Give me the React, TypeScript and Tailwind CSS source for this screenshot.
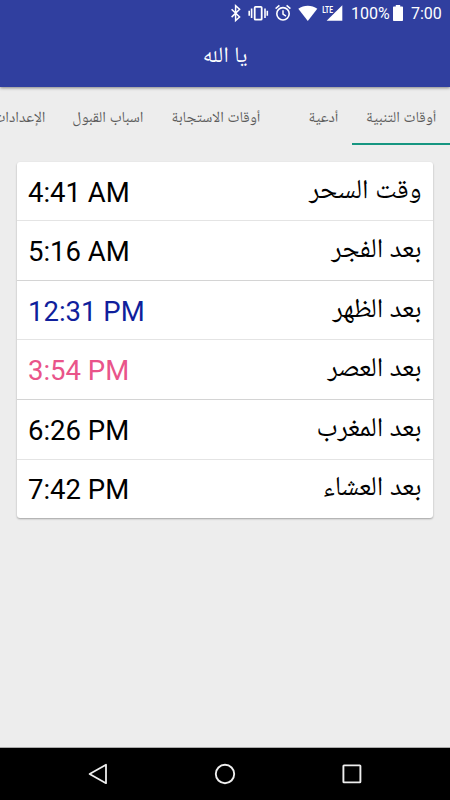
import React from 'react';

const tabs = [
  { label: 'أوقات التنبية', width: 'w-[98px]', active: true },
  { label: 'أدعية', width: 'w-[78px]' },
  { label: 'أوقات الاستجابة', width: 'w-[117px]' },
  { label: 'اسباب القبول', width: 'w-[98px]' },
  { label: 'الإعدادات', width: 'w-[86px]' },
];

const rows = [
  { time: '4:41 AM', label: 'وقت السحر', color: 'text-black', height: 'h-[59px]', line: 'border-[#e4e4e4]' },
  { time: '5:16 AM', label: 'بعد الفجر', color: 'text-black', height: 'h-[60px]', line: 'border-[#d4d4d4]' },
  { time: '12:31 PM', label: 'بعد الظهر', color: 'text-[#101f9c]', height: 'h-[59px]', line: 'border-[#e4e4e4]' },
  { time: '3:54 PM', label: 'بعد العصر', color: 'text-[#e9548a]', height: 'h-[60px]', line: 'border-[#d4d4d4]' },
  { time: '6:26 PM', label: 'بعد المغرب', color: 'text-black', height: 'h-[60px]', line: 'border-[#e4e4e4]' },
  { time: '7:42 PM', label: 'بعد العشاء', color: 'text-black', height: 'h-[58px]', line: 'border-transparent' },
];

const StatusIcons: React.FC = () => (
  <svg className="h-7 w-[125px] shrink-0" viewBox="0 0 125 28" fill="none">
    <path d="M1.6 9.2l8 7.8-4 3.6V5.6l4 3.7-8 7.8" stroke="#fff" strokeWidth="1.5" />
    <rect x="24.7" y="6.9" width="7" height="12.8" rx=".8" stroke="#fff" strokeWidth="1.8" />
    <path d="M21.6 8.5v9.5M35 8.5v9.5M19.2 10.7v5M37.3 10.7v5" stroke="#fff" strokeWidth="1.6" />
    <circle cx="53" cy="13.8" r="6.2" stroke="#fff" strokeWidth="1.6" />
    <path d="M53 10.2v4l3 1.9M45.6 8.6l3.8-3.2M60.4 8.6l-3.8-3.2" stroke="#fff" strokeWidth="1.5" />
    <path d="M68.3 8.8c5.5-4.2 13.5-4.2 19 0L77.8 21z" fill="#fff" />
    <path d="M112.3 5.2V20.8H96.6z" fill="#fff" />
    <path d="M91 4h12.8v9.6H91z" fill="#303f9f" />
    <text x="92.2" y="12.6" fill="#fff" fontFamily="Roboto, sans-serif" fontSize="9.5" fontWeight="700" textLength="10.8" lengthAdjust="spacingAndGlyphs">LTE</text>
  </svg>
);

const StatusBar: React.FC = () => (
  <div className="flex h-7 items-center justify-end pr-2 text-[16px] text-white">
    <StatusIcons />
    <span className="-ml-1 w-[39px]">100%</span>
    <svg className="ml-[3px] h-7 w-[10px] shrink-0" viewBox="0 0 10 28">
      <path d="M0 7.2q0-.8.8-.8h2V5h4.4v1.4h2q.8 0 .8.8v13q0 .8-.8.8H.8q-.8 0-.8-.8z" fill="#fff" />
    </svg>
    <span className="ml-2 w-[31px] whitespace-nowrap">7:00</span>
  </div>
);

const NavBar: React.FC = () => (
  <div className="flex h-[53px] items-center justify-center gap-[105px] border-t border-[#aaa] bg-black">
    <svg className="h-[22px] w-[22px]" viewBox="0 0 22 22" fill="none">
      <path d="M19 1.8v18.4L2.6 11z" stroke="#eee" strokeWidth="1.8" strokeLinejoin="round" />
    </svg>
    <svg className="h-[22px] w-[22px]" viewBox="0 0 22 22" fill="none">
      <circle cx="11" cy="11" r="9.2" stroke="#eee" strokeWidth="1.9" />
    </svg>
    <svg className="h-[22px] w-[22px]" viewBox="0 0 22 22" fill="none">
      <rect x="2.4" y="2.4" width="17" height="17" rx=".6" stroke="#eee" strokeWidth="1.9" />
    </svg>
  </div>
);

export default function App() {
  return (
    <div className="flex h-[800px] w-[450px] flex-col overflow-hidden bg-[#ededed] font-['Roboto','Noto_Naskh_Arabic_UI','Noto_Naskh_Arabic','Noto_Sans_Arabic','Noto_Sans',sans-serif]">
      <header className="h-[87px] shrink-0 bg-[#303f9f] shadow-[0_1px_3px_rgba(0,0,0,0.45)]">
        <StatusBar />
        <h1 dir="rtl" className="flex h-[59px] items-center justify-center pt-px text-[22px] leading-none text-white">
          يا الله
        </h1>
      </header>

      <nav dir="rtl" className="flex h-[58px] shrink-0">
        {tabs.map((tab) => (
          <div
            key={tab.label}
            className={`flex shrink-0 items-center border-b-2 pt-[9px] pr-[13.5px] text-[15.3px] leading-none text-[#5c5c5c] ${tab.width} ${tab.active ? 'border-[#169681]' : 'border-transparent'}`}
          >
            <span className="whitespace-nowrap">{tab.label}</span>
          </div>
        ))}
      </nav>

      <main className="flex-1 px-[17px] pt-[17px]">
        <div className="overflow-hidden rounded-[3px] bg-white shadow-[0_1px_2px_rgba(0,0,0,0.32)]">
          {rows.map((row) => (
            <div key={row.time} className={`flex items-center justify-between border-b pr-[11.5px] pl-[11px] ${row.height} ${row.line}`}>
              <span className={`pt-[3px] text-[27.5px] leading-none ${row.color}`}>{row.time}</span>
              <span dir="rtl" className="pt-[5px] text-[27.2px] leading-none text-black">{row.label}</span>
            </div>
          ))}
        </div>
      </main>

      <NavBar />
    </div>
  );
}
